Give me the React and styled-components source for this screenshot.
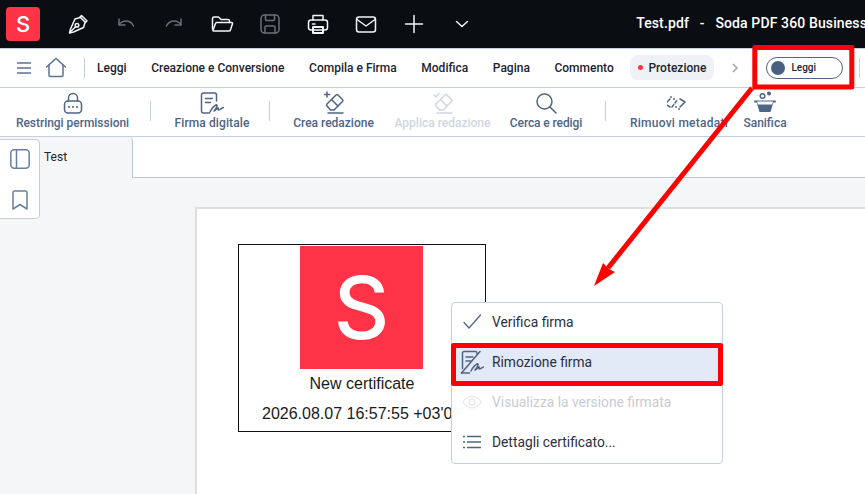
import React from "react";
import styled, { createGlobalStyle } from "styled-components";

const Global = createGlobalStyle`
  html, body { margin: 0; padding: 0; height: 100%; overflow: hidden; background: #f5f6f8; }
  #root { height: 100%; }
  * { box-sizing: border-box; }
`;

const Page = styled.div`
  position: relative;
  width: 865px;
  height: 494px;
  overflow: hidden;
  display: flex;
  flex-direction: column;
  font-family: Roboto, "Liberation Sans", sans-serif;
  color: #1f2530;
`;

const TopBar = styled.header`
  height: 48px;
  flex: none;
  background: #0a0d12;
  display: flex;
  align-items: center;
  padding-left: 6px;
  color: #fff;
`;
const Logo = styled.div`
  width: 34px;
  height: 34px;
  border-radius: 4px;
  background: #ff3347;
  display: flex;
  align-items: center;
  justify-content: center;
  font-family: Inter, Roboto, sans-serif;
  font-size: 22px;
  font-weight: 500;
  margin-right: 26px;
`;
const TopIcon = styled.span`
  width: 24px;
  height: 24px;
  flex: none;
  display: flex;
  align-items: center;
  justify-content: center;
  margin-right: 24px;
  color: ${p => (p.$dim ? "#6b6f75" : "#f4f5f6")};
`;
const Title = styled.div`
  margin-left: auto;
  font-size: 14px;
  font-weight: 500;
  white-space: pre;
  letter-spacing: 0.12px;
  margin-right: -2px;
  padding-bottom: 2px;
`;

const NavBar = styled.nav`
  height: 40px;
  flex: none;
  background: #fff;
  border-top: 1px solid #c3cede;
  border-bottom: 1px solid #c3cede;
  display: flex;
  align-items: center;
  padding: 0 0 1px 16px;
`;
const NavIcon = styled.span`
  display: flex;
  color: #5c7292;
  margin-right: ${p => p.$gap}px;
`;
const ChevronIcon = styled.span`
  display: flex;
  color: #9aa7ba;
  margin: 0 26px 0 16px;
`;
const VDivider = styled.span`
  flex: none;
  width: 1px;
  height: ${p => p.$h}px;
  background: #c3cede;
  margin: 0 ${p => p.$r}px 0 ${p => p.$l}px;
`;
const NavItem = styled.span`
  font-size: 12px;
  font-weight: 500;
  margin-right: 24.6px;
  white-space: nowrap;
  color: #1d2431;
`;
const NavPill = styled.span`
  height: 25px;
  width: 84px;
  margin-left: -8px;
  background: #eef1f6;
  border-radius: 8px;
  display: flex;
  align-items: center;
  gap: 5px;
  padding-left: 8px;
  font-size: 12px;
  font-weight: 500;
  color: #1d2431;
`;
const RedDot = styled.span`
  width: 5px;
  height: 5px;
  border-radius: 50%;
  background: #ff3347;
`;
const Toggle = styled.span`
  width: 77px;
  height: 22px;
  border: 1px solid #4f6585;
  border-radius: 11px;
  display: flex;
  align-items: center;
  padding-left: 4px;
  gap: 6px;
  font-size: 10px;
  font-weight: 500;
  color: #1d2431;
`;
const Knob = styled.span`
  width: 14px;
  height: 14px;
  border-radius: 50%;
  background: #4a6083;
`;

const ToolBar = styled.div`
  height: 49px;
  flex: none;
  background: #fff;
  border-bottom: 1px solid #c3cede;
  display: flex;
  align-items: flex-start;
  padding: 3px 0 0 16px;
`;
const Tool = styled.div`
  width: ${p => p.$w}px;
  margin-right: ${p => p.$gap}px;
  flex: none;
  display: flex;
  flex-direction: column;
  align-items: center;
  gap: 1px;
  font-size: 12px;
  line-height: 14px;
  font-weight: 500;
  letter-spacing: ${p => p.$ls ?? 0}px;
  white-space: nowrap;
  color: ${p => (p.$off ? "#cfd6e0" : "#4f6585")};
`;
const ToolIcon = styled.span`
  height: 24px;
  display: flex;
`;
const ToolDivider = styled(VDivider)`
  margin-top: 10px;
`;

const Work = styled.main`
  position: relative;
  flex: 1;
  min-height: 0;
  display: flex;
  flex-direction: column;
`;
const TabStrip = styled.div`
  height: 41px;
  flex: none;
  display: flex;
  background: #fff;
  border-bottom: 1px solid #b9c6d9;
`;
const Tab = styled.div`
  width: 133px;
  height: 41px;
  background: #f5f6f8;
  border-right: 1px solid #b9c6d9;
  border-top-right-radius: 4px;
  padding: 13px 0 0 44px;
  font-size: 12px;
  color: #1d2431;
`;
const SidePanel = styled.aside`
  position: absolute;
  left: -1px;
  top: 2px;
  width: 41px;
  height: 80px;
  background: #fff;
  border: 1px solid #c3cede;
  border-radius: 0 4px 4px 0;
  display: flex;
  flex-direction: column;
  align-items: center;
  justify-content: space-between;
  padding: 9px 0 8px;
  color: #6a80a0;
`;
const Canvas = styled.div`
  flex: 1;
  padding: 29px 0 0 195px;
  background: #f5f6f8;
`;
const Sheet = styled.div`
  width: 700px;
  height: 300px;
  background: #fff;
  border: 2px solid #dfdfdf;
  border-right: 0;
  border-bottom: 0;
  padding: 35px 0 0 41px;
`;
const SignBox = styled.div`
  width: 248px;
  height: 188px;
  border: 1px solid #111;
  display: flex;
  flex-direction: column;
  align-items: center;
  padding-top: 1px;
  font-family: "Liberation Sans", Arial, sans-serif;
  color: #1a1a1a;
  white-space: nowrap;
`;
const SignLogo = styled.div`
  width: 123px;
  height: 123px;
  flex: none;
  margin-right: 1px;
  background: #ff3347;
  display: flex;
  align-items: center;
  justify-content: center;
  color: #fff;
  font-family: Inter, Roboto, sans-serif;
  font-size: 86px;
  font-weight: 500;
`;
const SignName = styled.div`
  font-size: 16px;
  line-height: 18px;
  margin-top: 6px;
`;
const SignDate = styled.div`
  font-size: 16px;
  line-height: 18px;
  margin-top: 12px;
  align-self: flex-start;
  margin-left: 23px;
`;

const Menu = styled.div`
  position: absolute;
  left: 451px;
  top: 165px;
  width: 272px;
  height: 162px;
  background: #fff;
  border: 1px solid #c3cede;
  border-radius: 4px;
  display: flex;
  flex-direction: column;
`;
const MenuRow = styled.div`
  height: 40px;
  flex: none;
  display: flex;
  align-items: center;
  padding: 0 0 2px 10px;
  gap: 10px;
  font-size: 13.8px;
  color: ${p => (p.$off ? "#c9ccd2" : "#2a3040")};
  background: ${p => (p.$on ? "#e2e9f7" : "transparent")};
`;
const MenuIcon = styled.span`
  width: 20px;
  height: 20px;
  flex: none;
  display: flex;
  align-items: center;
  justify-content: center;
  color: ${p => (p.$off ? "#e6e8ec" : "#4f6585")};
`;

const Annotation = styled.svg`
  position: absolute;
  left: 0;
  top: 0;
  pointer-events: none;
`;

const S = { fill: "none", stroke: "currentColor", strokeWidth: 1.5, strokeLinecap: "round", strokeLinejoin: "round" };

const Ico = ({ w = 24, h = 24, vb = "0 0 24 24", children }) => (
  <svg width={w} height={h} viewBox={vb} style={{ flex: "none" }} {...S}>{children}</svg>
);

export default function App() {
  return (
    <Page>
      <Global />
      <TopBar>
        <Logo>S</Logo>
        <TopIcon>
          <Ico>
            <path d="M15.500 3.500l5.500 5.500-2 1.500-1.500 5-10 4.500-4 1 1-4 4.500-10 5-1.500z" />
            <path d="M14 5l5.500 5.500" />
            <path d="M3.800 20.500l5.700-5.700" />
            <circle cx="11" cy="13.300" r="1.800" />
          </Ico>
        </TopIcon>
        <TopIcon $dim>
          <Ico>
            <path d="M5 7v6h6" />
            <path d="M5 12.500c2-2.500 4-3.500 7-3.500 3.500 0 6 2 7.500 5" />
          </Ico>
        </TopIcon>
        <TopIcon $dim>
          <Ico>
            <path d="M19 7v6h-6" />
            <path d="M19 12.500c-2-2.500-4-3.500-7-3.500-3.500 0-6 2-7.500 5" />
          </Ico>
        </TopIcon>
        <TopIcon>
          <Ico>
            <path d="M2.500 17V6.500a1.500 1.500 0 0 1 1.500-1.500h4.500l2.500 2.500h7a1.500 1.500 0 0 1 1.500 1.500v1.500" />
            <path d="M2.800 18.500l3-7.500a1 1 0 0 1 1-.6h14.700a1 1 0 0 1 1 1.300l-2.200 6.500a1.200 1.200 0 0 1-1.100.8H3.800a1 1 0 0 1-1-.5z" />
          </Ico>
        </TopIcon>
        <TopIcon $dim>
          <Ico>
            <rect x="3" y="3" width="18" height="18" rx="3.500" />
            <path d="M7.500 3v4.500a1 1 0 0 0 1 1h7a1 1 0 0 0 1-1V3" />
            <path d="M7 21v-6a1 1 0 0 1 1-1h8a1 1 0 0 1 1 1v6" />
          </Ico>
        </TopIcon>
        <TopIcon>
          <Ico>
            <path d="M7 8V3.500h10V8" />
            <rect x="2.500" y="8" width="19" height="10" rx="2.500" />
            <path d="M6.500 12h2.500" />
            <rect x="7" y="15" width="10" height="6" strokeWidth="2" />
          </Ico>
        </TopIcon>
        <TopIcon>
          <Ico>
            <rect x="2.500" y="5" width="19" height="15" rx="2.500" />
            <path d="M3 7.500l9 6.500 9-6.500" />
          </Ico>
        </TopIcon>
        <TopIcon>
          <Ico>
            <path d="M12 3.500v17M3.500 12h17" />
          </Ico>
        </TopIcon>
        <TopIcon>
          <Ico>
            <path d="M6.500 9.500l5.500 5 5.500-5" />
          </Ico>
        </TopIcon>
        <Title>{"Test.pdf   -   Soda PDF 360 Business"}</Title>
      </TopBar>

      <NavBar>
        <NavIcon $gap={12}>
          <svg width="16" height="14" viewBox="0 0 16 14" fill="none" stroke="currentColor" strokeWidth="1.500">
            <path d="M1 2h14M1 7h14M1 12h14" />
          </svg>
        </NavIcon>
        <NavIcon $gap={0}>
          <Ico>
            <path d="M2.500 11L12 2.500l9.500 8.500" />
            <path d="M5 9v10.500a1 1 0 0 0 1 1h12a1 1 0 0 0 1-1V9" />
          </Ico>
        </NavIcon>
        <VDivider $h={20} $l={16} $r={12} />
        <NavItem>Leggi</NavItem>
        <NavItem>Creazione e Conversione</NavItem>
        <NavItem>Compila e Firma</NavItem>
        <NavItem>Modifica</NavItem>
        <NavItem>Pagina</NavItem>
        <NavItem>Commento</NavItem>
        <NavPill><RedDot />Protezione</NavPill>
        <ChevronIcon>
          <svg width="10" height="12" viewBox="0 0 10 12" fill="none" stroke="currentColor" strokeWidth="1.500">
            <path d="M3 2l4 4-4 4" />
          </svg>
        </ChevronIcon>
        <Toggle><Knob />Leggi</Toggle>
        <VDivider $h={20} $l={16} $r={0} />
      </NavBar>

      <ToolBar>
        <Tool $w={113} $gap={21} $ls={-0.03}>
          <ToolIcon>
            <Ico>
              <path d="M7.500 10V7a4.500 4.500 0 0 1 9 0v3" />
              <rect x="3.500" y="10" width="17" height="12" rx="3.500" />
              <path d="M8 16h.01M12 16h.01M16 16h.01" strokeWidth="2" />
            </Ico>
          </ToolIcon>
          Restringi permissioni
        </Tool>
        <ToolDivider $h={20} $l={0} $r={24} />
        <Tool $w={74} $gap={20} $ls={0.1}>
          <ToolIcon>
            <Ico>
              <path d="M16.500 10V4a2 2 0 0 0-2-2H3.500a2 2 0 0 0-2 2v16a2 2 0 0 0 2 2h6" />
              <path d="M5.500 7.500h7M5.500 11.500h5" />
              <path d="M10 21c1-2 4-6 6-7s1 3-2 6c2-1 3-3 4-3s-.5 2 .5 2 3-2 5-2.500" />
            </Ico>
          </ToolIcon>
          Firma digitale
        </Tool>
        <ToolDivider $h={20} $l={0} $r={23} />
        <Tool $w={81} $gap={20}>
          <ToolIcon>
            <Ico>
              <path d="M14 4l-9 9a1.500 1.500 0 0 0 0 2l3.500 4h3.500l8.500-8.500a1.500 1.500 0 0 0 0-2L16 4a1.500 1.500 0 0 0-2 0z" />
              <path d="M9.500 8.500l6.500 6.500" />
              <path d="M6 22h15" />
              <path d="M5 1v5M2.500 3.500h5" />
            </Ico>
          </ToolIcon>
          Crea redazione
        </Tool>
        <Tool $w={97} $gap={20} $off>
          <ToolIcon>
            <Ico>
              <path d="M14 4l-9 9a1.500 1.500 0 0 0 0 2l3.500 4h3.500l8.500-8.500a1.500 1.500 0 0 0 0-2L16 4a1.500 1.500 0 0 0-2 0z" />
              <path d="M9.500 8.500l6.500 6.500" />
              <path d="M6 22h15" />
              <path d="M3 4l2 2 3-4" />
            </Ico>
          </ToolIcon>
          Applica redazione
        </Tool>
        <Tool $w={70} $gap={24} $ls={-0.1}>
          <ToolIcon>
            <Ico>
              <circle cx="10.500" cy="10.500" r="7.500" />
              <path d="M16 16l6 6" />
            </Ico>
          </ToolIcon>
          Cerca e redigi
        </Tool>
        <ToolDivider $h={20} $l={0} $r={23} />
        <Tool $w={100} $gap={14} $ls={0.25}>
          <ToolIcon>
            <Ico vb="4 0 24 24">
              <path d="M7 8l-5 5 5 3" />
              <path d="M17 16l5-5-5-3" />
              <path d="M9 16l6-8" strokeDasharray="3 2" />
              <path d="M8 6h.01M11 8h.01M13 16h.01M16 18h.01" strokeWidth="1.800" />
            </Ico>
          </ToolIcon>
          Rimuovi metadati
        </Tool>
        <Tool $w={44} $gap={0}>
          <ToolIcon>
            <Ico>
              <circle cx="9.500" cy="5" r="2.300" />
              <circle cx="16" cy="2.500" r="1.300" fill="currentColor" />
              <path d="M2 10.500h20" strokeWidth="2" />
              <path d="M3.500 11l3 10h11l3-10z" fill="currentColor" stroke="none" />
              <path d="M4 10.500h16l-.9 3H4.900z" fill="#fff" stroke="none" />
            </Ico>
          </ToolIcon>
          Sanifica
        </Tool>
      </ToolBar>

      <Work>
        <TabStrip>
          <Tab>Test</Tab>
        </TabStrip>
        <SidePanel>
          <svg width="20" height="20" viewBox="0 0 20 20" fill="none" stroke="currentColor" strokeWidth="1.500">
            <rect x="0.800" y="0.800" width="18.400" height="18.400" rx="3.500" />
            <path d="M6.500 1v18" />
          </svg>
          <svg width="16" height="20" viewBox="0 0 16 20" fill="none" stroke="currentColor" strokeWidth="1.500" strokeLinejoin="round">
            <path d="M1 2.500a1.500 1.500 0 0 1 1.500-1.500h11a1.500 1.500 0 0 1 1.500 1.500V19l-7-4.500L1 19z" />
          </svg>
        </SidePanel>
        <Canvas>
          <Sheet>
            <SignBox>
              <SignLogo>S</SignLogo>
              <SignName>New certificate</SignName>
              <SignDate>2026.08.07 16:57:55 +03'00'</SignDate>
            </SignBox>
          </Sheet>
        </Canvas>
        <Menu>
          <MenuRow>
            <MenuIcon>
              <svg width="20" height="20" viewBox="0 0 20 20" fill="none" stroke="currentColor" strokeWidth="1.300" strokeLinecap="round">
                <path d="M2 10.500l5 5.500L18.500 3" />
              </svg>
            </MenuIcon>
            Verifica firma
          </MenuRow>
          <MenuRow $on>
            <MenuIcon>
              <Ico w={24} h={24}>
                <path d="M17 4V3a1.500 1.500 0 0 0-1.500-1.500H4A1.500 1.500 0 0 0 2.500 3v15.500" />
                <path d="M6 7h7M6 11h5" />
                <path d="M1.500 23L20 1.500" />
                <path d="M11 21c1-2 4-6 6-7s1 3-2 6c2-1 3-3 4-3s-.5 2 .5 2 2.500-1.500 4-2" />
                <path d="M1.500 23h8" />
              </Ico>
            </MenuIcon>
            Rimozione firma
          </MenuRow>
          <MenuRow $off>
            <MenuIcon $off>
              <Ico w={20} h={20}>
                <path d="M1 12s4-7 11-7 11 7 11 7-4 7-11 7-11-7-11-7z" />
                <circle cx="12" cy="12" r="3.500" />
              </Ico>
            </MenuIcon>
            Visualizza la versione firmata
          </MenuRow>
          <MenuRow>
            <MenuIcon>
              <svg width="20" height="20" viewBox="0 0 20 20" fill="none" stroke="currentColor" strokeWidth="1.500">
                <path d="M1 4.500h2M1 10h2M1 15.500h2M5 4.500h14M5 10h14M5 15.500h14" />
              </svg>
            </MenuIcon>
            Dettagli certificato...
          </MenuRow>
        </Menu>
      </Work>

      <Annotation width="865" height="494" viewBox="0 0 865 494">
        <rect x="754.800" y="47.500" width="97" height="39.500" fill="none" stroke="#f00" strokeWidth="5" strokeLinejoin="round" />
        <rect x="453.500" y="345.500" width="267" height="38" fill="none" stroke="#f00" strokeWidth="5" strokeLinejoin="round" />
        <path d="M752 88L608 268" stroke="#f00" strokeWidth="5" fill="none" />
        <path d="M594 286l9-23 6 6 6 3z" fill="#f00" />
      </Annotation>
    </Page>
  );
}
